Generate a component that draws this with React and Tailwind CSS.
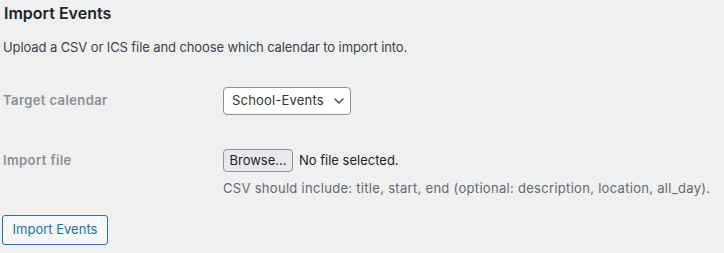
const ChevronDown = () => (
  <svg width="10" height="6" viewBox="0 0 10 6" fill="none" className="ml-auto">
    <path d="M1 1l4 4 4-4" stroke="#3c434a" strokeWidth="1.3" strokeLinecap="round" strokeLinejoin="round" />
  </svg>
)

const App = () => {
  return (
    <div className="min-h-[253px] w-[724px] bg-[#f0f0f1] pl-[2px] font-['Inter',sans-serif] text-[13px] text-[#2c3338]">
      {/* Heading */}
      <h2 className="h-[26px] pl-[2px] text-[16px] font-semibold leading-[26px] text-[#1d2327]">Import Events</h2>

      <p className="mt-[11px] pl-[1px] leading-[20px] tracking-[-0.1px] text-[#3c434a]">
        Upload a CSV or ICS file and choose which calendar to import into.
      </p>

      {/* Form rows */}
      <div className="mt-[30px] grid grid-cols-[221px_1fr]">
        <div className="flex h-[28px] items-center pl-[1px] font-semibold tracking-[0.4px] text-[#8c8f94]">Target calendar</div>
        <div>
          <div className="flex h-[28px] w-[128px] items-center rounded-[4px] border border-[#8c8f94] bg-white pl-[8px] pr-[6px] text-[#2c3338]">
            <span className="tracking-[0.2px]">School-Events</span>
            <ChevronDown />
          </div>
        </div>

        <div className="mt-[34px] flex h-[23px] items-center pl-[1px] font-semibold tracking-[0.4px] text-[#8c8f94]">Import file</div>
        <div className="mt-[34px]">
          <div className="flex h-[23px] items-center">
            <div className="flex h-[23px] w-[70px] items-center justify-center rounded-[4px] border border-[#8f8f9d] bg-[#e9e9ed] text-[#1d2327]">
              Browse...
            </div>
            <span className="ml-[6px] text-[#1d2327]">No file selected.</span>
          </div>
          <p className="mt-[6px] leading-[20px] tracking-[0.3px] text-[#646970]">
            CSV should include: title, start, end (optional: description, location, all_day).
          </p>
        </div>
      </div>

      <div className="mt-[17px]">
        <button className="h-[30px] w-[106px] rounded-[3px] border border-[#2271b1] bg-[#f6f7f7] text-[13px] text-[#2271b1]">
          Import Events
        </button>
      </div>
    </div>
  )
}

export default App
